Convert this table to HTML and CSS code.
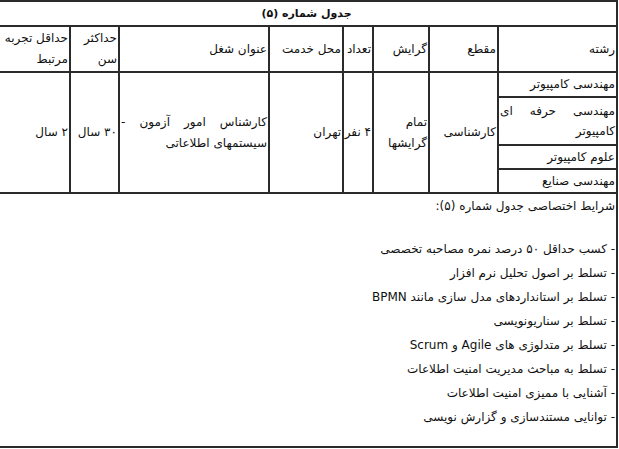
FILE: index.html
```html
<!DOCTYPE html>
<html lang="fa" dir="rtl">
<head>
<meta charset="utf-8">
<link rel="stylesheet" href="styles.css">
</head>
<body>
<div class="frame">
<table class="jobs">
<colgroup>
<col class="c-field"><col class="c-degree"><col class="c-trend"><col class="c-count"><col class="c-place"><col class="c-title"><col class="c-age"><col class="c-exp">
</colgroup>
<tr class="r-caption"><th colspan="8">جدول شماره (۵)</th></tr>
<tr class="r-head">
<td>رشته</td><td>مقطع</td><td>گرایش</td><td>تعداد</td><td>محل خدمت</td><td>عنوان شغل</td><td>حداکثر سن</td><td>حداقل تجربه مرتبط</td>
</tr>
<tr class="r-sub1">
<td>مهندسی کامپیوتر</td>
<td rowspan="4">کارشناسی</td>
<td rowspan="4">تمام گرایشها</td>
<td rowspan="4" class="nowrap">۴ نفر</td>
<td rowspan="4">تهران</td>
<td rowspan="4">کارشناس امور آزمون - سیستمهای اطلاعاتی</td>
<td rowspan="4">۳۰ سال</td>
<td rowspan="4">۲ سال</td>
</tr>
<tr class="r-sub2"><td>مهندسی حرفه ای کامپیوتر</td></tr>
<tr class="r-sub3"><td>علوم کامپیوتر</td></tr>
<tr class="r-sub4"><td>مهندسی صنایع</td></tr>
<tr class="r-notes">
<td colspan="8">
<p class="notes-head">شرایط اختصاصی جدول شماره (۵):</p>
<ul class="notes-list">
<li>- کسب حداقل ۵۰ درصد نمره مصاحبه تخصصی</li>
<li>- تسلط بر اصول تحلیل نرم افزار</li>
<li>- تسلط بر استانداردهای مدل سازی مانند BPMN</li>
<li>- تسلط بر سناریونویسی</li>
<li>- تسلط بر متدلوژی های Agile و Scrum</li>
<li>- تسلط به مباحث مدیریت امنیت اطلاعات</li>
<li>- آشنایی با ممیزی امنیت اطلاعات</li>
<li>- توانایی مستندسازی و گزارش نویسی</li>
</ul>
</td>
</tr>
</table>
</div>
</body>
</html>
```

FILE: styles.css
```css
html, body {
  margin: 0;
  padding: 0;
  background: #ffffff;
}
body {
  font-family: "DejaVu Sans", "Liberation Sans", sans-serif;
  font-size: 12px;
  color: #111;
}
.frame {
  overflow: hidden;
  padding-right: 1px;
  width: 618px;
}
.jobs {
  border-collapse: collapse;
  table-layout: fixed;
  width: 621px;
}
.c-field { width: 119px; }
.c-degree { width: 69px; }
.c-trend { width: 56px; }
.c-count { width: 30px; }
.c-place { width: 74px; }
.c-title { width: 150px; }
.c-age { width: 49px; }
.c-exp { width: 74px; }

.jobs th, .jobs td {
  border: 2px solid #2b2b2b;
  padding: 0 1px;
  line-height: 21px;
  text-align: justify;
  vertical-align: middle;
  box-sizing: border-box;
}
.nowrap { white-space: nowrap; }
.r-caption th {
  font-weight: bold;
  font-size: 11px;
  text-align: center;
  height: 25px;
}
.r-head td { height: 46px; text-align: right; }
.r-sub1 td { height: 25px; }
.r-sub2 td { height: 48px; line-height: 20px; }
.r-sub3 td { height: 24px; }
.r-sub4 td { height: 24px; }
.r-notes td {
  vertical-align: top;
  height: 254px;
  line-height: 24px;
  text-align: right;
}
.notes-head {
  margin: 0 0 19px 0;
}
.notes-list {
  list-style: none;
  margin: 0;
  padding: 0;
}
```
